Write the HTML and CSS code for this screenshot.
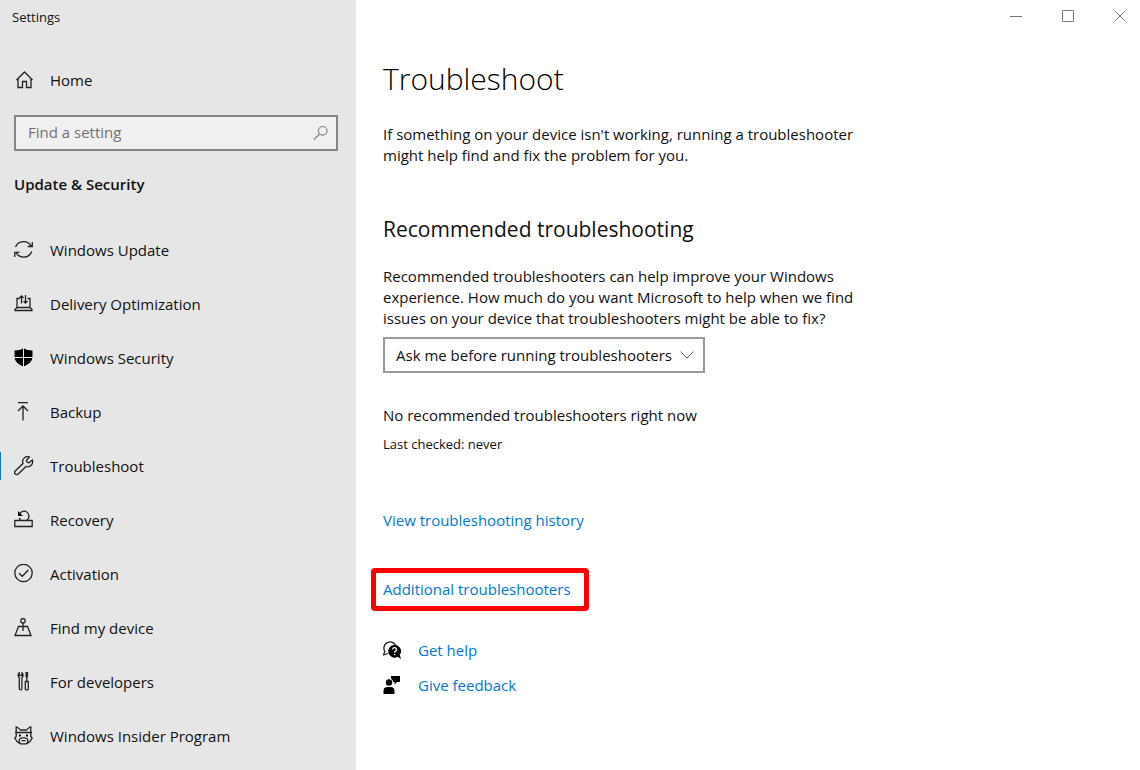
FILE: index.html
```
<!DOCTYPE html>
<html lang="en">

<head>
 <meta charset="UTF-8">
 <meta name="viewport" content="width=device-width, initial-scale=1.0">
 <title>Settings</title>
 <link rel="stylesheet" href="styles.css">
</head>

<body>
 <div class="window">
  <aside class="sidebar">
   <div class="app-title">Settings</div>
   <a class="nav-item home" href="#">
    <svg class="icon" viewBox="0 0 20 20"><path d="M2.500 10 10.500 2l8 8M4 9V17.500H8.500V11.500h4v6H17V9"/></svg>
    <span>Home</span>
   </a>
   <form class="search">
    <input type="text" placeholder="Find a setting" aria-label="Find a setting">
    <button type="button" aria-label="Search">
     <svg class="icon" viewBox="0 0 20 20"><circle cx="13" cy="6.500" r="4.800"/><path d="M9.500 10 3 16.500"/></svg>
    </button>
   </form>
   <h2 class="section-title">Update &amp; Security</h2>
   <nav>
    <a class="nav-item" href="#">
     <svg class="icon" viewBox="0 0 20 20"><path d="M1.500 7A8.700 8.700 0 0 1 17.300 6.300M18.300 2V6.500H13.800M17.800 11.500A8.700 8.700 0 0 1 2 12.500M.8 17V12.300H5.500"/></svg>
     <span>Windows Update</span>
    </a>
    <a class="nav-item" href="#">
     <svg class="icon" viewBox="0 0 20 20"><path d="M5.500 4.500H3V13.500M13.500 4.500H16V13.500M3 13.500H16L18 15.500V16.500H1V15.500ZM7.500 9.500V2M5.500 4 7.500 2l2 2M11.500 1v8M9.500 7l2 2 2-2"/></svg>
     <span>Delivery Optimization</span>
    </a>
    <a class="nav-item" href="#">
     <svg class="icon" viewBox="0 0 20 20"><path class="fill" d="M9.500 0C7 1.800 4 2.500 .5 2.500V8.500C.5 13.500 4.500 16.500 9.500 18.500 14.500 16.500 18.500 13.500 18.500 8.500V2.500C15 2.500 12 1.800 9.500 0Z"/><path class="shield-lines" d="M9.500 0V19M0 9.500H19"/></svg>
     <span>Windows Security</span>
    </a>
    <a class="nav-item" href="#">
     <svg class="icon" viewBox="0 0 20 20"><path d="M4 .7h10M9 18.500V4M4 9l5-5 5 5"/></svg>
     <span>Backup</span>
    </a>
    <a class="nav-item active" href="#">
     <svg class="icon" viewBox="0 0 20 20"><path d="M15.500 1A5 5 0 0 0 9 7.500L1.200 15A2 2 0 0 0 4.200 18L12 10.500A5 5 0 0 0 18.300 4L15 6.800 13.200 6.300 12.400 4.300Z"/></svg>
     <span>Troubleshoot</span>
    </a>
    <a class="nav-item" href="#">
     <svg class="icon" viewBox="0 0 20 20"><path d="M6.500 10.500H.8V16.500H18.200V10.500H12.500M5.300 4.400A5 5 0 1 1 12.500 10.500H7.500A5 5 0 0 1 5.300 8"/><path class="fill" d="M4 1V6H9Z"/></svg>
     <span>Recovery</span>
    </a>
    <a class="nav-item" href="#">
     <svg class="icon" viewBox="0 0 20 20"><circle cx="9.500" cy="9" r="8.700"/><path d="M5 9.200 8.300 12.300 14.300 6"/></svg>
     <span>Activation</span>
    </a>
    <a class="nav-item" href="#">
     <svg class="icon" viewBox="0 0 20 20"><circle cx="9" cy="2.800" r="2.200"/><path d="M9 5V13M9 8.500H4.500L1 17.500H17L13.500 8.500H9"/></svg>
     <span>Find my device</span>
    </a>
    <a class="nav-item" href="#">
     <svg class="icon" viewBox="0 0 20 20"><path d="M5.200 .7C3.500 2 4 5 5.300 6V16.500a1.300 1.300 0 0 0 2.600 0V6C9.200 5 9.700 2 8 .7V3.500H5.200ZM12.800 4.500V9.500M11.300 9.500h3v7.500a.8 .8 0 0 1-.8 .8h-1.400a.8 .8 0 0 1-.8-.8ZM12.100 .7h1.400V4.500H12.100Z"/></svg>
     <span>For developers</span>
    </a>
    <a class="nav-item" href="#">
     <svg class="icon" viewBox="0 0 20 20"><path d="M2.200 6.500V.8C4.200 1 5.500 3.500 6.500 4H12.500C13.500 3.500 14.800 1 16.800 .8V6.500M1 6.500H18M2.200 6.500V10.500L.8 12 3 15.500 6.500 17.800H12.500L16 15.500 18.200 12 16.800 10.500V6.500M5.300 13V16.500L6.500 17.800M13.700 13V16.500L12.500 17.800M5.300 13 8 11.800H11L13.700 13M7.500 14.700h4"/><path class="fill" d="M5 8.500h2v2H5ZM12 8.500h2v2H12Z"/></svg>
     <span>Windows Insider Program</span>
    </a>
   </nav>
  </aside>

  <div class="page">
   <div class="caption-buttons">
    <button type="button" aria-label="Minimize"><svg viewBox="0 0 12 12"><path d="M0 6.500H12"/></svg></button>
    <button type="button" aria-label="Maximize"><svg viewBox="0 0 12 12"><path d="M.5 .5H11.500V11.500H.5Z"/></svg></button>
    <button type="button" aria-label="Close"><svg viewBox="0 0 12 12"><path d="M.5 .5 11.500 11.500M11.500 .5 .5 11.500"/></svg></button>
   </div>
   <main class="content">
    <h1>Troubleshoot</h1>
    <p class="intro">If something on your device isn't working, running a troubleshooter<br>might help find and fix the problem for you.</p>

    <h2>Recommended troubleshooting</h2>
    <label for="preference">Recommended troubleshooters can help improve your Windows<br>experience. How much do you want Microsoft to help when we find<br>issues on your device that troubleshooters might be able to fix?</label>
    <div class="select-box">
     <select id="preference">
      <option>Ask me before running troubleshooters</option>
     </select>
     <svg class="chevron" viewBox="0 0 14 8"><path d="M.5 .5 7 7 13.500 .5"/></svg>
    </div>
    <p class="status">No recommended troubleshooters right now</p>
    <p class="checked">Last checked: never</p>

    <a class="history" href="#">View troubleshooting history</a>
    <a class="additional" href="#">Additional troubleshooters</a>

    <div class="help-links">
     <a href="#">
      <svg class="icon" viewBox="0 0 20 20"><path d="M5 12.500 .5 14 1.800 10.500A6 6 0 1 1 12.500 4"/><path class="fill" d="M11.500 4A6.300 6.300 0 1 0 14.500 15.800L18 18 16.800 14A6.300 6.300 0 0 0 11.500 4Z"/><path class="question" d="M9.700 8.500a1.900 1.900 0 1 1 2.800 1.700C11.700 10.600 11.700 11 11.700 11.800M11.700 13.100V14.300"/></svg>
      <span>Get help</span>
     </a>
     <a href="#">
      <svg class="icon" viewBox="0 0 20 20"><circle class="fill" cx="6" cy="6.500" r="3.200"/><path class="fill" d="M.5 18V15Q.5 11 4.500 11H7.500Q11.500 11 11.500 15V18ZM8 0H17V6H14L11.500 8.500V6H10.200Q10 3.500 8 2.500Z"/></svg>
      <span>Give feedback</span>
     </a>
    </div>
   </main>
  </div>
 </div>
</body>

</html>
```
FILE: styles.css
```
* {
 box-sizing: border-box;
}

body {
 margin: 0;
 background-color: #fff;
 color: #111;
 font-family: "Open Sans", "Noto Sans", sans-serif;
 font-size: 15px;
 line-height: 21px;
}

h1,
h2,
p {
 margin: 0;
}

a {
 color: #0078d7;
 text-decoration: none;
}

button {
 padding: 0;
 border: 0;
 background: none;
}

svg {
 fill: none;
 stroke: #222;
}

.window {
 display: flex;
 min-height: 100vh;
}

/* Left navigation */
.sidebar {
 flex: 0 0 356px;
 background-color: #e6e6e6;
}

.app-title {
 padding: 7px 12px;
 font-size: 13px;
 line-height: 20px;
}

.nav-item {
 display: flex;
 align-items: center;
 gap: 16px;
 height: 54px;
 padding-left: 14px;
 color: #111;
}

.icon {
 flex: none;
 width: 20px;
 height: 20px;
 stroke-width: 1.3;
}

.icon .fill {
 fill: #000;
 stroke: none;
}

.icon .shield-lines {
 stroke: #e6e6e6;
 stroke-width: 1;
}

.home {
 margin-top: 19px;
}

.search {
 display: flex;
 height: 36px;
 margin: 8px 18px 0 14px;
 border: 2px solid #858585;
 background-color: #f0f0f0;
}

.search input {
 flex: 1;
 min-width: 0;
 padding: 0 12px 2px;
 border: 0;
 background: none;
 font: inherit;
}

.search input::placeholder {
 color: #707070;
 opacity: 1;
}

.search button {
 width: 32px;
 padding-top: 4px;
}

.search svg {
 width: 18px;
 height: 18px;
 stroke: #808080;
}

.section-title {
 margin: 23px 0 28px;
 padding-left: 14px;
 font-size: 15px;
 font-weight: 600;
}

.active {
 position: relative;
}

.active::before {
 content: "";
 position: absolute;
 left: 0;
 width: 1px;
 height: 28px;
 background-color: #0078d7;
}

/* Right side */
.page {
 flex: 1;
}

.caption-buttons {
 display: flex;
 gap: 12px;
 justify-content: flex-end;
 height: 34px;
}

.caption-buttons button {
 width: 40px;
}

.caption-buttons svg {
 width: 12px;
 height: 12px;
 stroke: #777;
}

.content {
 padding: 24px 27px;
}

.content h1 {
 color: #000;
 font-size: 30px;
 font-weight: 300;
 line-height: 42px;
}

.intro {
 margin-top: 24px;
}

.content h2 {
 margin: 47px 0 21px;
 font-size: 21px;
 font-weight: 400;
 line-height: 32px;
}

.content label {
 display: block;
}

.select-box {
 position: relative;
 width: 322px;
 margin-top: 8px;
}

.select-box select {
 display: block;
 width: 100%;
 height: 36px;
 padding: 0 28px 0 11px;
 border: 2px solid #999;
 border-radius: 0;
 background-color: #fff;
 color: #111;
 font: inherit;
 appearance: none;
}

.chevron {
 position: absolute;
 top: 14px;
 right: 11px;
 width: 14px;
 height: 8px;
 stroke: #666;
}

.status {
 margin-top: 32px;
}

.checked {
 margin-top: 8px;
 font-size: 13px;
}

.history {
 display: block;
 margin-top: 55px;
}

.additional {
 display: block;
 width: 218px;
 margin: 37px 0 0 -12px;
 padding: 6px 7px;
 border: 5px solid #f00;
 border-radius: 4px;
}

.help-links {
 display: flex;
 flex-direction: column;
 gap: 14px;
 margin-top: 29px;
}

.help-links a {
 display: flex;
 align-items: center;
 gap: 15px;
}

.icon .question {
 stroke: #fff;
 stroke-width: 1.4;
}
```
